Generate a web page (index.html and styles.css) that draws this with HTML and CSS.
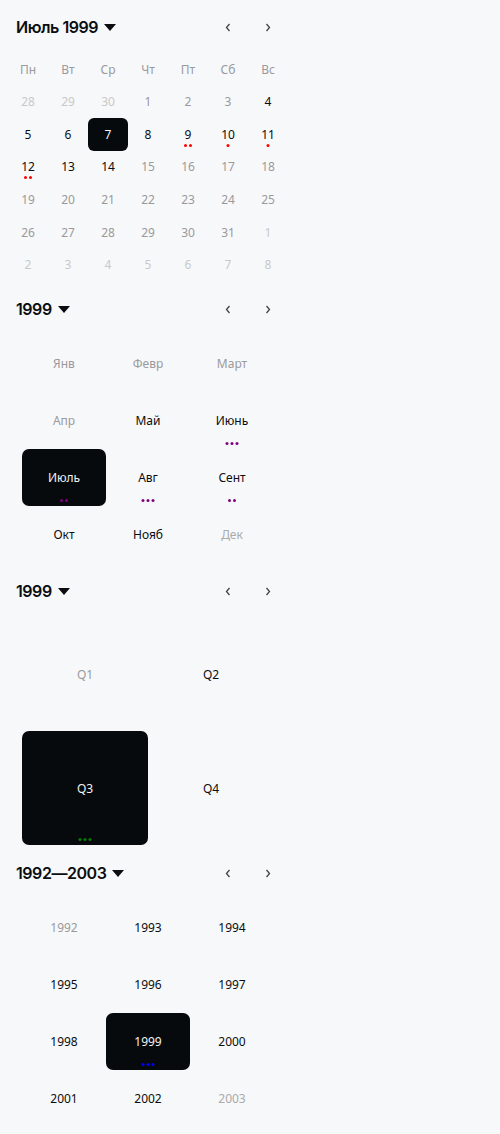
FILE: index.html
```html
<!DOCTYPE html>
<html lang="ru">
<head>
<meta charset="utf-8">
<title>Calendar</title>
<link rel="stylesheet" href="styles.css">
</head>
<body>
<div class="pickers">

  <section class="picker">
    <div class="head">
      <div class="title">Июль 1999 <span class="caret"></span></div>
      <div class="nav">
        <button class="nav-btn"><svg width="6" height="9" viewBox="0 0 6 9"><path d="M4.5 1 L1.5 4.5 L4.5 8" fill="none" stroke="#444" stroke-width="1.3"/></svg></button>
        <button class="nav-btn"><svg width="6" height="9" viewBox="0 0 6 9"><path d="M1.5 1 L4.5 4.5 L1.5 8" fill="none" stroke="#444" stroke-width="1.3"/></svg></button>
      </div>
    </div>
    <div class="days">
      <div class="wd">Пн</div><div class="wd">Вт</div><div class="wd">Ср</div><div class="wd">Чт</div><div class="wd">Пт</div><div class="wd">Сб</div><div class="wd">Вс</div>

      <div class="cell other">28</div><div class="cell other">29</div><div class="cell other">30</div>
      <div class="cell off">1</div><div class="cell off">2</div><div class="cell off">3</div><div class="cell">4</div>

      <div class="cell">5</div><div class="cell">6</div><div class="cell sel">7</div><div class="cell">8</div>
      <div class="cell">9<span class="dots"><i class="dot red"></i><i class="dot red"></i></span></div>
      <div class="cell">10<span class="dots"><i class="dot red"></i></span></div>
      <div class="cell">11<span class="dots"><i class="dot red"></i></span></div>

      <div class="cell">12<span class="dots"><i class="dot red"></i><i class="dot red"></i></span></div>
      <div class="cell">13</div><div class="cell">14</div>
      <div class="cell off">15</div><div class="cell off">16</div><div class="cell off">17</div><div class="cell off">18</div>

      <div class="cell off">19</div><div class="cell off">20</div><div class="cell off">21</div><div class="cell off">22</div><div class="cell off">23</div><div class="cell off">24</div><div class="cell off">25</div>

      <div class="cell off">26</div><div class="cell off">27</div><div class="cell off">28</div><div class="cell off">29</div><div class="cell off">30</div><div class="cell off">31</div><div class="cell other">1</div>

      <div class="cell other">2</div><div class="cell other">3</div><div class="cell other">4</div><div class="cell other">5</div><div class="cell other">6</div><div class="cell other">7</div><div class="cell other">8</div>
    </div>
  </section>

  <section class="picker">
    <div class="head">
      <div class="title">1999 <span class="caret"></span></div>
      <div class="nav">
        <button class="nav-btn"><svg width="6" height="9" viewBox="0 0 6 9"><path d="M4.5 1 L1.5 4.5 L4.5 8" fill="none" stroke="#444" stroke-width="1.3"/></svg></button>
        <button class="nav-btn"><svg width="6" height="9" viewBox="0 0 6 9"><path d="M1.5 1 L4.5 4.5 L1.5 8" fill="none" stroke="#444" stroke-width="1.3"/></svg></button>
      </div>
    </div>
    <div class="grid3">
      <div class="cell off">Янв</div><div class="cell off">Февр</div><div class="cell off">Март</div>
      <div class="cell off">Апр</div><div class="cell">Май</div>
      <div class="cell">Июнь<span class="dots"><i class="dot purple"></i><i class="dot purple"></i><i class="dot purple"></i></span></div>
      <div class="cell sel r7">Июль<span class="dots"><i class="dot purple"></i><i class="dot purple"></i></span></div>
      <div class="cell">Авг<span class="dots"><i class="dot purple"></i><i class="dot purple"></i><i class="dot purple"></i></span></div>
      <div class="cell">Сент<span class="dots"><i class="dot purple"></i><i class="dot purple"></i></span></div>
      <div class="cell">Окт</div><div class="cell">Нояб</div><div class="cell off2">Дек</div>
    </div>
  </section>

  <section class="picker">
    <div class="head">
      <div class="title">1999 <span class="caret"></span></div>
      <div class="nav">
        <button class="nav-btn"><svg width="6" height="9" viewBox="0 0 6 9"><path d="M4.5 1 L1.5 4.5 L4.5 8" fill="none" stroke="#444" stroke-width="1.3"/></svg></button>
        <button class="nav-btn"><svg width="6" height="9" viewBox="0 0 6 9"><path d="M1.5 1 L4.5 4.5 L1.5 8" fill="none" stroke="#444" stroke-width="1.3"/></svg></button>
      </div>
    </div>
    <div class="grid2">
      <div class="cell off">Q1</div><div class="cell">Q2</div>
      <div class="cell sel r7">Q3<span class="dots"><i class="dot green"></i><i class="dot green"></i><i class="dot green"></i></span></div>
      <div class="cell">Q4</div>
    </div>
  </section>

  <section class="picker">
    <div class="head">
      <div class="title">1992—2003 <span class="caret"></span></div>
      <div class="nav">
        <button class="nav-btn"><svg width="6" height="9" viewBox="0 0 6 9"><path d="M4.5 1 L1.5 4.5 L4.5 8" fill="none" stroke="#444" stroke-width="1.3"/></svg></button>
        <button class="nav-btn"><svg width="6" height="9" viewBox="0 0 6 9"><path d="M1.5 1 L4.5 4.5 L1.5 8" fill="none" stroke="#444" stroke-width="1.3"/></svg></button>
      </div>
    </div>
    <div class="grid3">
      <div class="cell off">1992</div><div class="cell">1993</div><div class="cell">1994</div>
      <div class="cell">1995</div><div class="cell">1996</div><div class="cell">1997</div>
      <div class="cell">1998</div>
      <div class="cell sel r7">1999<span class="dots"><i class="dot blue"></i><i class="dot blue"></i><i class="dot blue"></i></span></div>
      <div class="cell">2000</div>
      <div class="cell">2001</div><div class="cell">2002</div><div class="cell off2">2003</div>
    </div>
  </section>

</div>
</body>
</html>
```

FILE: styles.css
```css
html, body {
  margin: 0;
  background: #f7f8fa;
}

body {
  font-family: "Noto Sans", "Open Sans", sans-serif;
  font-size: 12px;
  color: #0b0d10;
}

.pickers {
  padding: 8px;
  width: 280px;
}

.picker {
  padding: 8px 0 9px;
}

.head {
  display: flex;
  align-items: center;
  justify-content: space-between;
  height: 22px;
  margin-bottom: 15px;
}

.title {
  display: flex;
  align-items: center;
  gap: 6px;
  padding-left: 8px;
  font-family: Inter, "Noto Sans", sans-serif;
  font-weight: 600;
  font-size: 16px;
  letter-spacing: -0.45px;
  color: #0b0d10;
}

.caret {
  width: 0;
  height: 0;
  border-left: 6px solid transparent;
  border-right: 6px solid transparent;
  border-top: 7px solid #0b0d10;
  margin-top: 1px;
}

.nav {
  display: flex;
}

.nav-btn {
  width: 40px;
  height: 22px;
  display: flex;
  align-items: center;
  justify-content: center;
  padding: 0;
  border: 0;
  background: none;
}

.days {
  display: grid;
  grid-template-columns: repeat(7, 40px);
  grid-template-rows: repeat(7, 1fr);
  height: 228px;
}

.grid3 {
  display: grid;
  grid-template-columns: repeat(3, 84px);
  grid-template-rows: repeat(4, 57px);
  margin: 0 14px;
}

.grid2 {
  display: grid;
  grid-template-columns: repeat(2, 126px);
  grid-template-rows: repeat(2, 114px);
  margin: 0 14px;
}

.wd {
  display: flex;
  align-items: center;
  justify-content: center;
  color: #9a9a9a;
}

.cell {
  position: relative;
  display: flex;
  align-items: center;
  justify-content: center;
  color: #0b0d10;
}

.cell.off {
  color: #9a9a9a;
}

.cell.off2 {
  color: #aaaaaa;
}

.cell.other {
  color: #c9c9c9;
}

.cell.sel {
  background: #060a0d;
  color: #f2f2f2;
  border-radius: 6px;
}

.cell.r7 {
  border-radius: 7px;
}

.dots {
  position: absolute;
  left: 50%;
  bottom: 4px;
  transform: translateX(-50%);
  display: flex;
  gap: 2px;
}

.dot {
  width: 3px;
  height: 3px;
  border-radius: 50%;
}

.red { background: #ff0000; }
.purple { background: #800080; }
.green { background: #008000; }
.blue { background: #0000ff; }
```
